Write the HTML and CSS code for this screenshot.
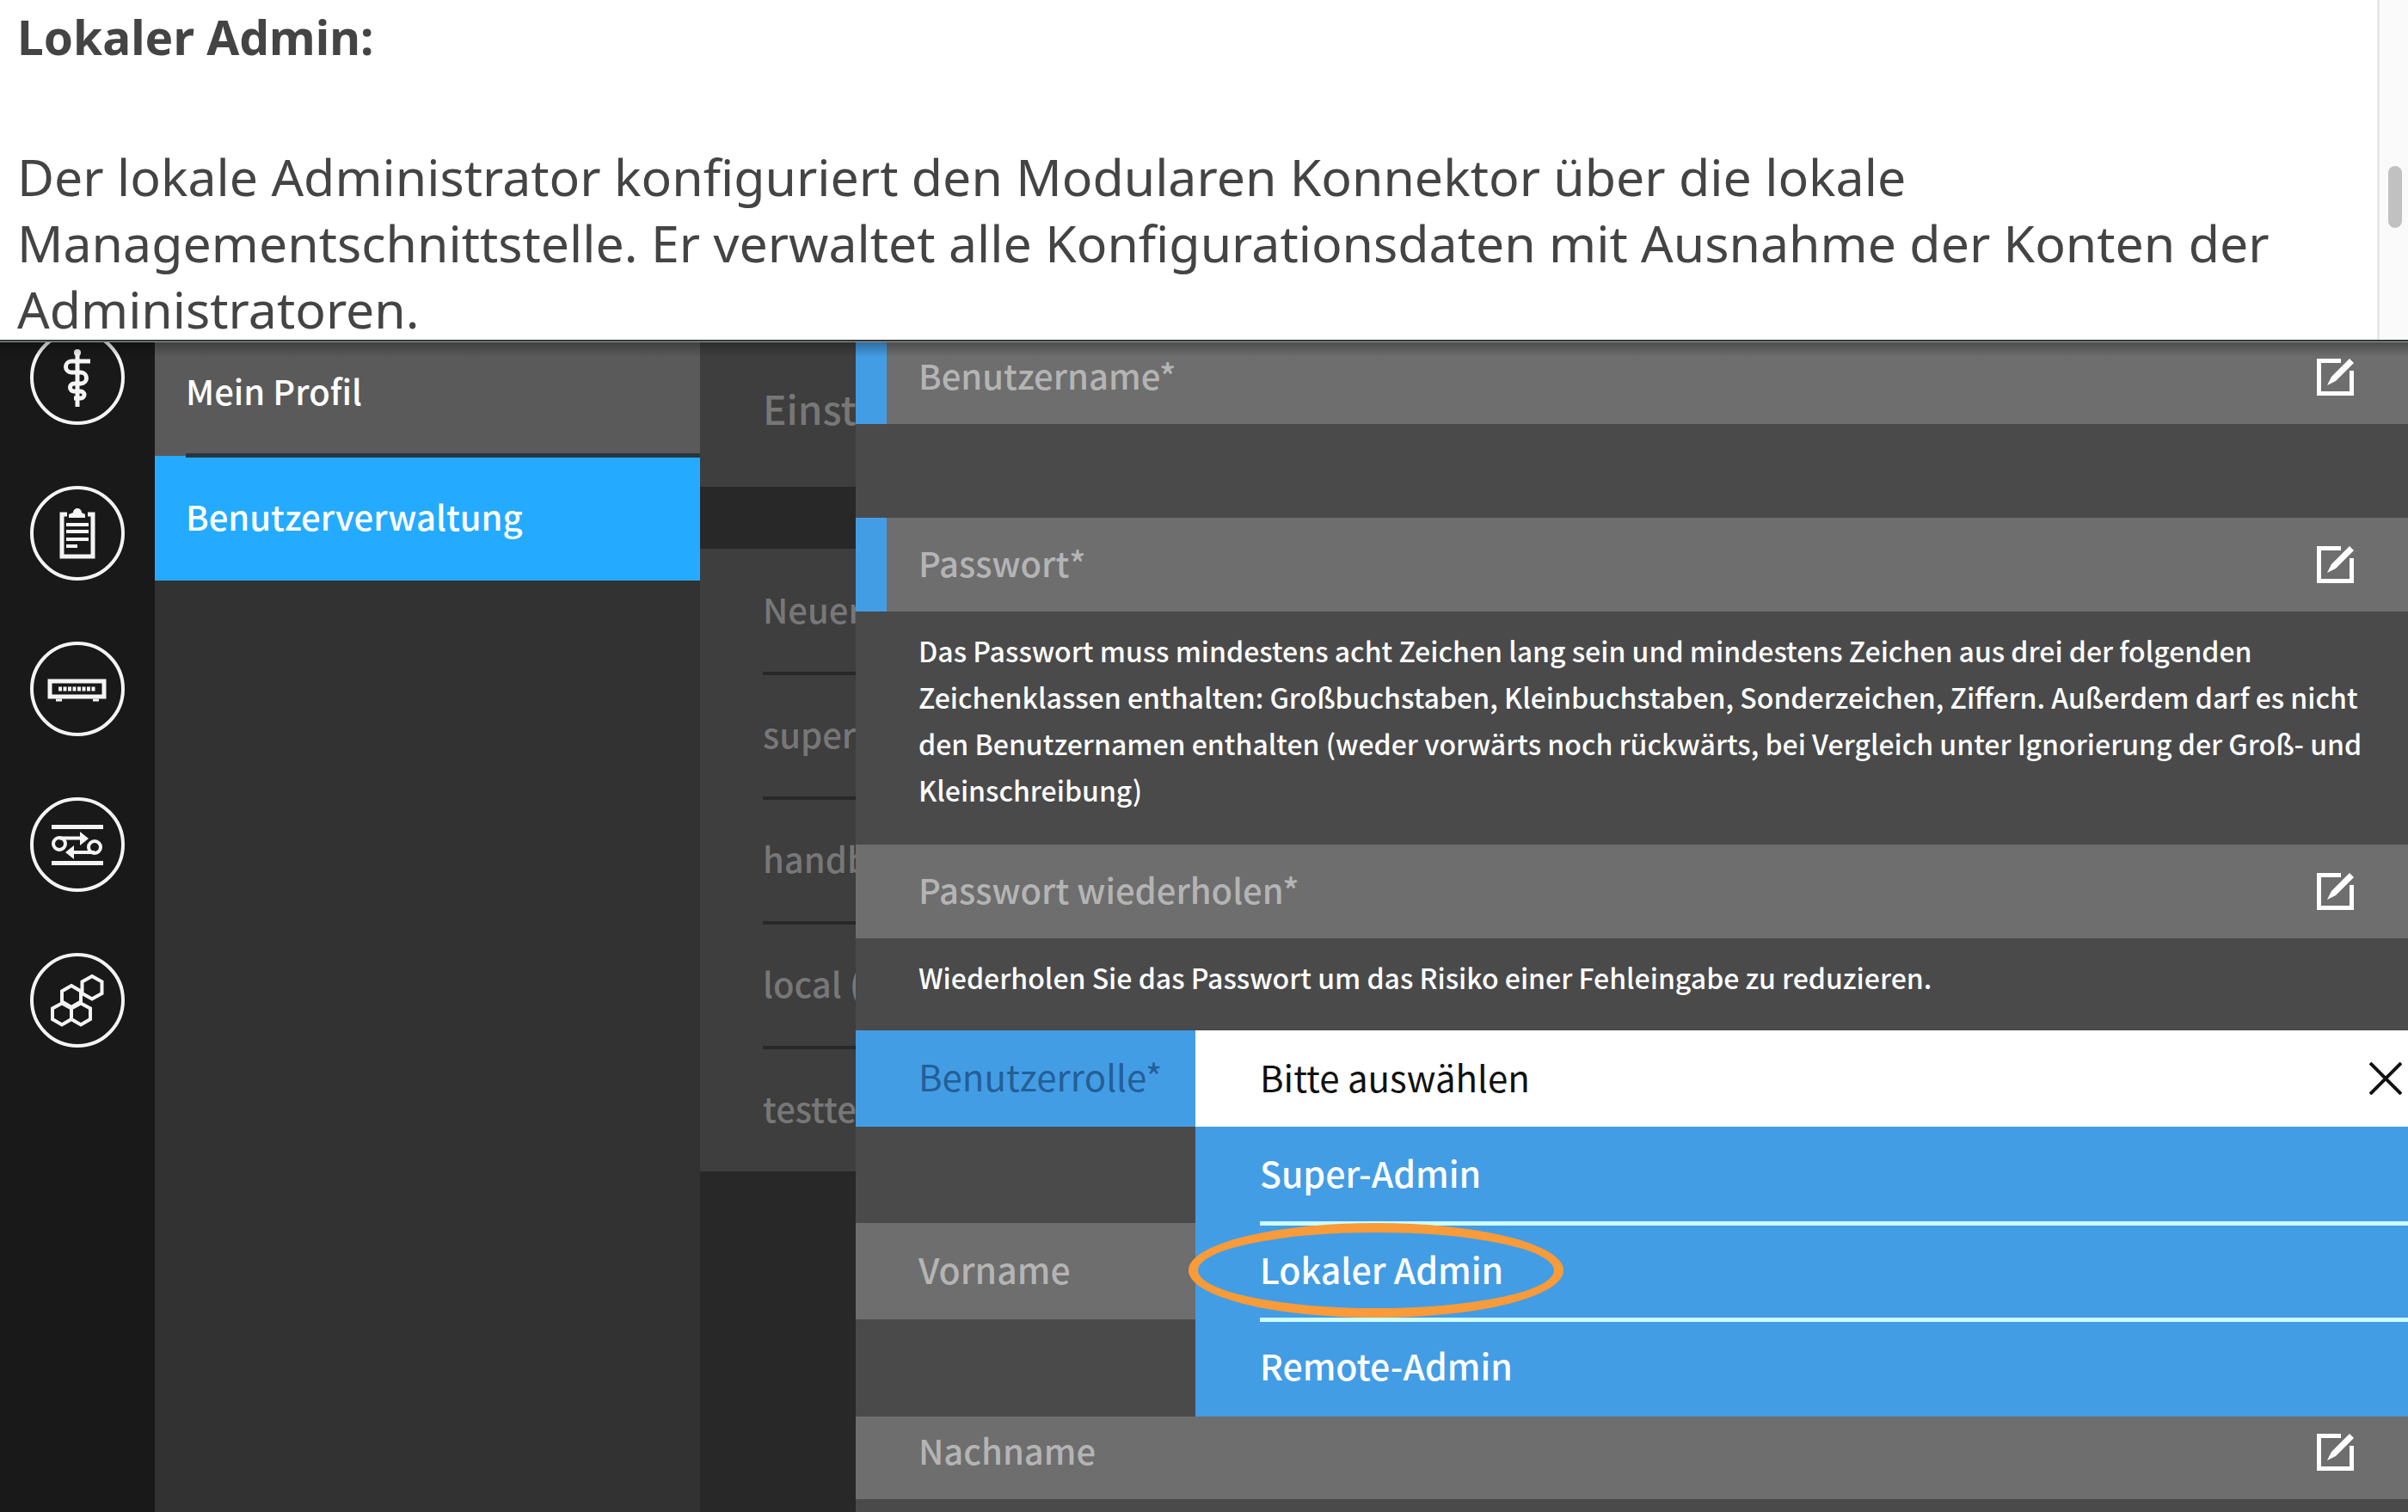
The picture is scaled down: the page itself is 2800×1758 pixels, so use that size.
FILE: index.html
```html
<!DOCTYPE html>
<html lang="de">
<head>
<meta charset="utf-8">
<title>Benutzerverwaltung</title>
<link rel="stylesheet" href="styles.css">
</head>
<body>
<svg class="sprite" aria-hidden="true">
  <symbol id="edit" viewBox="0 0 43 43">
    <path d="M28 2.5H2.5v38h38V14" fill="none" stroke="currentColor" stroke-width="5"/>
    <path d="M38 0l5 5-21 21-10 5 5-10z" fill="currentColor"/>
  </symbol>
</svg>

<section class="help">
  <div class="help-text">
    <h1>Lokaler Admin:</h1>
    <p>Der lokale Administrator konfiguriert den Modularen Konnektor über die lokale Managementschnittstelle. Er verwaltet alle Konfigurationsdaten mit Ausnahme der Konten der Administratoren.</p>
  </div>
  <div class="scrollbar"><div class="thumb"></div></div>
</section>

<main class="viewport">
  <div class="app">
    <nav class="rail" aria-label="Bereiche">
      <button class="rail-button" type="button" aria-label="Praxis">
        <svg viewBox="0 0 110 110" fill="none" stroke="currentColor" stroke-width="5">
          <path d="M55 25v64"/>
          <circle cx="55" cy="26" r="4" fill="currentColor" stroke="none"/>
          <path d="M70 36H48a6.500 6.500 0 0 0 0 13h11a6.500 6.500 0 0 1 0 13h-8a4.500 4.500 0 0 0 0 9h8a4 4 0 0 1 0 8h-8"/>
        </svg>
      </button>
      <button class="rail-button" type="button" aria-label="Protokoll">
        <svg viewBox="0 0 110 110" fill="none" stroke="currentColor" stroke-width="4">
          <path d="M43 33h-6v49h36V33h-6" stroke-width="5"/>
          <path d="M45 37v-4l5-2a5 5 0 0 1 10 0l4 2v4z" fill="currentColor" stroke="none"/>
          <path d="M42 45h26M42 53h26M42 62h26M42 70h13"/>
        </svg>
      </button>
      <button class="rail-button" type="button" aria-label="Konnektor">
        <svg viewBox="0 0 110 110" fill="none" stroke="currentColor" stroke-width="5">
          <path d="M23 46h63v18H23z"/>
          <path d="M33 55h43" stroke-width="5" stroke-dasharray="4 1.500"/>
          <path d="M30 68h7M73 68h7" stroke-width="3"/>
        </svg>
      </button>
      <button class="rail-button" type="button" aria-label="Netzwerk">
        <svg viewBox="0 0 110 110" fill="none" stroke="currentColor" stroke-width="4">
          <path d="M25 34.500h60M25 76.500h60" stroke-width="5"/>
          <circle cx="34" cy="54" r="7"/>
          <circle cx="75" cy="58" r="7"/>
          <path d="M34 47.500h26M75 64h-26"/>
          <path d="M58 40l10 8-10 8zM51 56l-10 8 10 8z" fill="currentColor" stroke="none"/>
        </svg>
      </button>
      <button class="rail-button" type="button" aria-label="System">
        <svg viewBox="0 0 110 110" fill="none" stroke="currentColor" stroke-width="4">
          <path d="M72 27l11.500 6.500v13.500L72 53.500 60.500 47V33.500zM48 38l11 6.500v12L48 63l-11-6.500v-12zM37 58.500l11 6v12.500l-11 6.500-11-6.500V64.500zM59 58.500l11 6v12.500l-11 6.500-11-6.500V64.500z"/>
        </svg>
      </button>
    </nav>

    <nav class="sidebar" aria-label="Menü">
      <a href="#profil">Mein Profil</a>
      <a href="#verwaltung" class="active">Benutzerverwaltung</a>
    </nav>

    <section class="users">
      <h2>Einst</h2>
      <ul>
        <li>Neuer</li>
        <li>super</li>
        <li>handb</li>
        <li>local (</li>
        <li>testte</li>
      </ul>
    </section>

    <form class="panel">
      <div class="field required">
        <label for="username">Benutzername*</label>
        <input id="username" type="text">
        <button type="button" aria-label="Bearbeiten"><svg><use href="#edit"/></svg></button>
      </div>
      <p class="hint"></p>
      <div class="field required">
        <label for="password">Passwort*</label>
        <input id="password" type="password">
        <button type="button" aria-label="Bearbeiten"><svg><use href="#edit"/></svg></button>
      </div>
      <p class="hint">Das Passwort muss mindestens acht Zeichen lang sein und mindestens Zeichen aus drei der folgenden Zeichenklassen enthalten: Großbuchstaben, Kleinbuchstaben, Sonderzeichen, Ziffern. Außerdem darf es nicht den Benutzernamen enthalten (weder vorwärts noch rückwärts, bei Vergleich unter Ignorierung der Groß- und Kleinschreibung)</p>
      <div class="field">
        <label for="repeat">Passwort wiederholen*</label>
        <input id="repeat" type="password">
        <button type="button" aria-label="Bearbeiten"><svg><use href="#edit"/></svg></button>
      </div>
      <p class="hint">Wiederholen Sie das Passwort um das Risiko einer Fehleingabe zu reduzieren.</p>

      <div class="role">
        <div class="role-labels">
          <div class="role-label" id="role-label">Benutzerrolle*</div>
          <div class="firstname"><label for="firstname">Vorname</label><input id="firstname" type="text"></div>
        </div>
        <div class="menu" role="group" aria-labelledby="role-label">
          <div class="menu-head">
            <span>Bitte auswählen</span>
            <button type="button" aria-label="Schließen">
              <svg viewBox="0 0 38 38"><path d="M1 1l36 36M37 1L1 37" stroke="currentColor" stroke-width="4"/></svg>
            </button>
          </div>
          <button class="option" type="button"><span>Super-Admin</span></button>
          <button class="option marked" type="button"><span>Lokaler Admin</span></button>
          <button class="option" type="button"><span>Remote-Admin</span></button>
        </div>
      </div>

      <div class="field">
        <label for="lastname">Nachname</label>
        <input id="lastname" type="text">
        <button type="button" aria-label="Bearbeiten"><svg><use href="#edit"/></svg></button>
      </div>
    </form>
  </div>
</main>
</body>
</html>
```
FILE: styles.css
```css
*, *::before, *::after { box-sizing: border-box; }

body {
  margin: 0;
  height: 100vh;
  display: flex;
  flex-direction: column;
  overflow: hidden;
  background: #fff;
  font: 500 40px/60px "Noto Sans CJK SC", sans-serif;
}

h1, h2, p, ul { margin: 0; padding: 0; }
ul { list-style: none; }
a { color: inherit; text-decoration: none; }
button, input {
  margin: 0;
  padding: 0;
  border: 0;
  background: none;
  color: inherit;
  font: inherit;
  text-align: left;
}
svg { display: block; }
.sprite { position: absolute; width: 0; height: 0; }

/* Help text above the application */
.help { display: flex; height: 395px; flex: none; }
.help-text {
  flex: 1;
  padding: 4px 60px 0 20px;
  color: #444;
  font: 400 59px/77px "Noto Sans", sans-serif;
}
.help-text h1 { margin-bottom: 86px; font-size: 55px; font-weight: 700; line-height: 77px; }
.scrollbar {
  width: 36px;
  padding: 193px 7px 0 10px;
  border-left: 3px solid #e8e8e8;
  background: #fafafa;
}
.thumb { height: 72px; border-radius: 8px; background: #c1c1c1; }

/* Application, scrolled slightly under its top edge */
.viewport {
  position: relative;
  flex: 1;
  overflow: hidden;
  border-top: 2px solid #333936;
}
.viewport::before {
  content: "";
  position: absolute;
  inset: 0 0 auto;
  z-index: 3;
  height: 18px;
  border-top: 1px solid #999;
  background: linear-gradient(rgba(0, 0, 0, .3), rgba(0, 0, 0, 0));
}
.app { display: flex; height: calc(100% + 13px); margin-top: -13px; }

.rail {
  display: flex;
  flex-direction: column;
  align-items: center;
  gap: 71px;
  width: 180px;
  flex: none;
  background: #191919;
  color: #f4f4f4;
}
.rail-button { width: 110px; height: 110px; flex: none; border: 4px solid; border-radius: 50%; }
.rail-button svg { width: 110px; height: 110px; margin: -4px; }

.sidebar { width: 634px; flex: none; background: #323232; color: #fff; }
.sidebar a { display: block; height: 146px; padding: 40px 36px; background: #5a5a5a; }
.sidebar .active { position: relative; height: 145px; background: #24abff; }
.sidebar .active::before {
  content: "";
  position: absolute;
  inset: -3px 0 auto 36px;
  height: 5px;
  background: #263640;
}

.users {
  width: 181px;
  flex: none;
  overflow: hidden;
  background: #282828;
  color: #777;
  white-space: nowrap;
}
.users h2 { height: 182px; padding: 60px 0 0 73px; background: #3e3e3e; font-size: 46px; font-weight: 500; }
.users ul { margin-top: 72px; padding: 2px 0 0 73px; background: #3e3e3e; }
.users li { height: 145px; padding-top: 38px; border-bottom: 4px solid #282828; }
.users li:last-child { height: 142px; border: 0; }

.panel { flex: 1; min-width: 0; background: #4a4a4a; color: #b4b4b4; }
.field { display: flex; align-items: center; height: 109px; padding: 0 63px 0 73px; background: #6e6e6e; }
.field.required { padding-left: 37px; border-left: 36px solid #439de5; }
.field label { padding-bottom: 5px; }
.field input, .firstname input { flex: 1; min-width: 0; }
.field button, .field svg { width: 43px; height: 43px; color: #fff; }
.hint {
  min-height: 109px;
  padding: 18px 40px 37px 73px;
  color: #fff;
  font-size: 32px;
  line-height: 54px;
}

/* Open role menu; its lower edge lies over the next field */
.role { position: relative; z-index: 1; display: flex; height: 449px; margin: -2px 0 -13px; font-size: 41px; }
.role-labels { width: 395px; flex: none; background: #4a4a4a; }
.role-label { height: 112px; padding: 23px 73px; background: #439de5; color: #245f96; font-size: 42px; font-weight: 400; }
.firstname { display: flex; height: 112px; margin-top: 112px; padding: 23px 0 29px 73px; background: #6e6e6e; }
.menu { flex: 1; background: #439de5; color: #fff; }
.menu-head {
  display: flex;
  align-items: center;
  justify-content: space-between;
  height: 112px;
  padding: 0 7px 0 75px;
  background: #fff;
  color: #111;
  font-size: 42px;
  font-weight: 400;
}
.menu-head span { padding-bottom: 5px; }
.menu-head svg { width: 38px; height: 38px; }
.option { position: relative; display: block; width: 100%; height: 112px; padding-left: 75px; }
.option span { display: block; height: 100%; padding-top: 20px; border-top: 5px solid #cff; }
.menu-head + .option { height: 110px; }
.menu-head + .option span { padding-top: 23px; border: 0; }
.option.marked::after {
  content: "";
  position: absolute;
  inset: 2px auto 0 -8px;
  width: 436px;
  border: 11px solid #f99b38;
  border-radius: 50%;
}
```
